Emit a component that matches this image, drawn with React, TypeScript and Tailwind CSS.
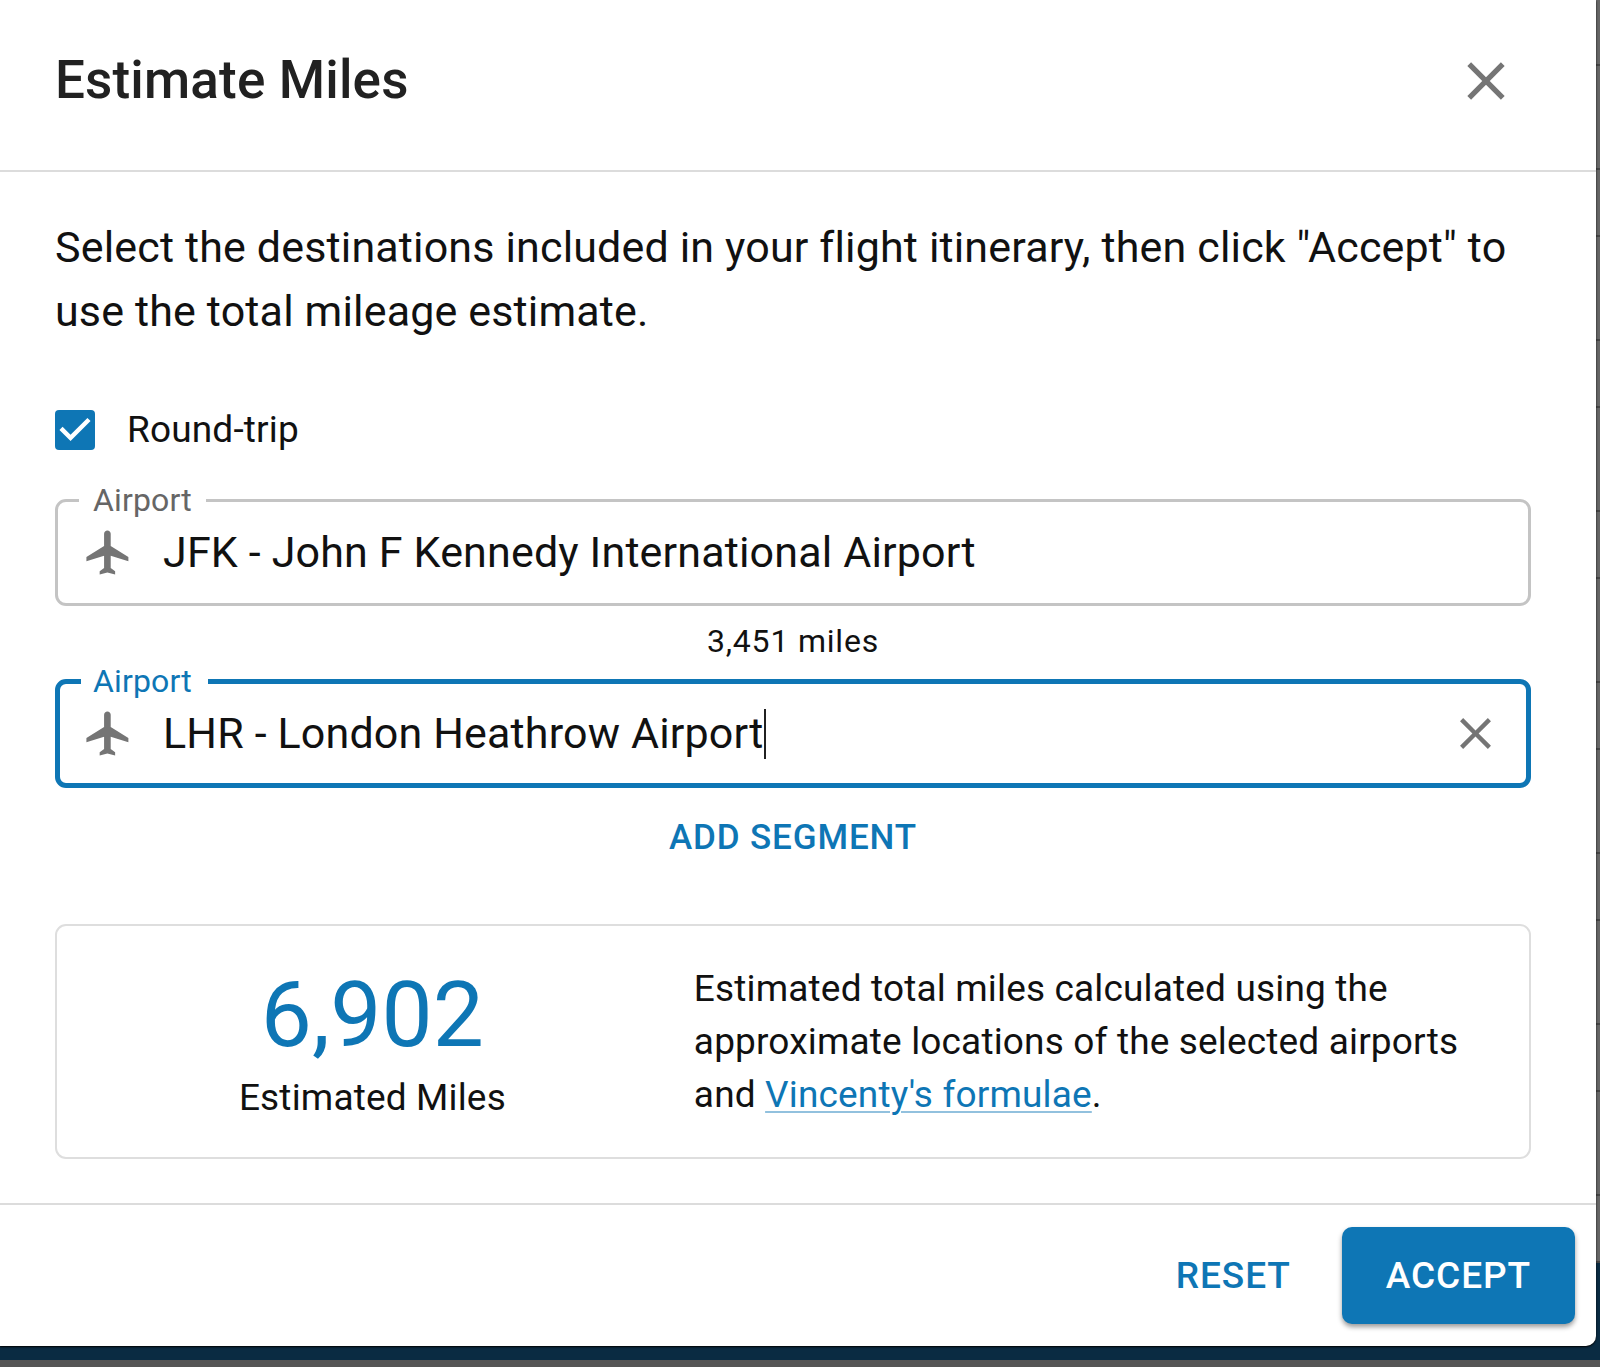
import { useState } from "react";
import { clsx } from "clsx";

const CloseIcon = ({ className }: { className?: string }) => (
  <svg viewBox="0 0 24 24" fill="currentColor" aria-hidden="true" className={className}>
    <path d="M19 6.41L17.59 5 12 10.59 6.41 5 5 6.41 10.59 12 5 17.59 6.41 19 12 13.41 17.59 19 19 17.59 13.41 12z" />
  </svg>
);

const FlightIcon = ({ className }: { className?: string }) => (
  <svg viewBox="0 0 24 24" fill="currentColor" aria-hidden="true" className={className}>
    <path d="M21 16v-2l-8-5V3.5c0-.83-.67-1.5-1.5-1.5S10 2.67 10 3.5V9l-8 5v2l8-2.5V19l-2 1.5V22l3.5-1 3.5 1v-1.5L13 19v-5.5l8 2.5z" />
  </svg>
);

interface AirportFieldProps {
  id: string;
  value: string;
  onChange: (value: string) => void;
  active?: boolean;
}

const AirportField = ({ id, value, onChange, active }: AirportFieldProps) => (
  <fieldset
    className={clsx(
      "min-w-0 rounded-[11px]",
      active ? "border-5 border-[#0e76b5]" : "border-3 border-[#c4c4c4]"
    )}
  >
    <legend
      className={clsx(
        "ml-[21px] text-[32px] leading-[32px]",
        active ? "pl-3 pr-4 text-[#0e76b5]" : "px-[14px] text-[#666]"
      )}
    >
      <label htmlFor={id}>Airport</label>
    </legend>
    <div className={clsx("flex items-center pt-2.5", active ? "pr-6 pb-[23px] pl-[22px]" : "px-6 pb-6")}>
      <FlightIcon className="size-[53px] shrink-0 text-[#757575]" />
      <div className="ml-7 flex min-w-0 flex-1 items-center">
        <input
          id={id}
          type="text"
          value={value}
          onChange={(e) => onChange(e.target.value)}
          className={clsx(
            "h-[53px] min-w-0 bg-transparent text-[43px] outline-none",
            active ? "field-sizing-content caret-transparent" : "flex-1"
          )}
        />
        {active && <span className="h-[50px] w-0.5 shrink-0 bg-[#212121]" />}
      </div>
      {active && (
        <button type="button" aria-label="Clear" onClick={() => onChange("")} className="text-[#757575]">
          <CloseIcon className="size-[53px]" />
        </button>
      )}
    </div>
  </fieldset>
);

// Dimmed page that sits behind the dialog
const Backdrop = () => (
  <div aria-hidden="true" className="absolute inset-0 flex flex-col bg-[#666]">
    <div className="min-h-0 flex-1 overflow-hidden">
      <div className="h-[66px] border-b-2 border-[#444]" />
      {Array.from({ length: 7 }, (_, i) => (
        <div key={i}>
          <div className="h-[104px] border-b-2 border-[#444]" />
          <div className="h-[67px] border-b-2 border-[#444]" />
        </div>
      ))}
    </div>
    <div className="h-[97px] bg-[#0a2b42]" />
    <div className="h-[7px] bg-[#555]" />
  </div>
);

export default function App() {
  const [roundTrip, setRoundTrip] = useState(true);
  const [from, setFrom] = useState("JFK - John F Kennedy International Airport");
  const [to, setTo] = useState("LHR - London Heathrow Airport");

  return (
    <div className="relative min-h-screen font-[Roboto,sans-serif] tracking-[0.01em] text-[#111]">
      <Backdrop />

      <main
        role="dialog"
        aria-labelledby="dialog-title"
        className="relative mr-1 rounded-br-[10px] bg-white shadow-[0_1px_2px_#000]"
      >
        <header className="flex items-center justify-between border-b-2 border-[#dcdcdc] pt-[38px] pr-[78px] pb-[47px] pl-[55px]">
          <h1 id="dialog-title" className="text-[53px] leading-[85px] font-medium text-[#212121]">
            Estimate Miles
          </h1>
          <button type="button" aria-label="Close" className="text-[#757575]">
            <CloseIcon className="size-16" />
          </button>
        </header>

        <div className="flex flex-col pt-[43px] pr-[65px] pb-11 pl-[55px]">
          <p className="text-[43px] leading-[64px]">
            Select the destinations included in your flight itinerary, then click "Accept" to use the total mileage
            estimate.
          </p>

          <label className="mt-[55px] flex h-16 items-center gap-8 self-start text-[37px]">
            <span className="grid size-10 place-items-center rounded-[4px] bg-[#0e76b5]">
              <input
                type="checkbox"
                checked={roundTrip}
                onChange={(e) => setRoundTrip(e.target.checked)}
                className="col-start-1 row-start-1 size-10 appearance-none"
              />
              {roundTrip && (
                <svg viewBox="3 3 18 18" aria-hidden="true" className="pointer-events-none col-start-1 row-start-1 size-10">
                  <path fill="#fff" d="M10 17l-5-5 1.41-1.41L10 14.17l7.59-7.59L19 8l-9 9z" />
                </svg>
              )}
            </span>
            Round-trip
          </label>

          <div className="mt-[22px]">
            <AirportField id="airport-from" value={from} onChange={setFrom} />
            <p className="mt-[11px] text-center text-[32px] leading-[48px] tracking-wide">3,451 miles</p>
            <AirportField id="airport-to" value={to} onChange={setTo} active />
          </div>

          <button
            type="button"
            className="mt-2.5 h-20 self-center px-4 text-[35px] font-medium tracking-wide text-[#0e76b5]"
          >
            ADD SEGMENT
          </button>

          <section className="mt-[46px] grid grid-cols-[3fr_4fr] items-center rounded-[11px] border-2 border-[#dedede] py-[33px]">
            <div className="text-center">
              <p className="text-[91px] leading-[112px] text-[#0e76b5]">6,902</p>
              <p className="text-[37px] leading-[53px]">Estimated Miles</p>
            </div>
            <p className="pr-10 pl-1.5 text-[37px] leading-[53px]">
              Estimated total miles calculated using the approximate locations of the selected airports and{" "}
              <a
                href="#vincenty"
                className="text-[#0e76b5] underline decoration-[#0e76b5]/45 decoration-2 underline-offset-4"
              >
                Vincenty's formulae
              </a>
              .
            </p>
          </section>
        </div>

        <footer className="flex justify-end gap-[21px] border-t-2 border-[#dcdcdc] py-[22px] pr-[21px]">
          <button type="button" className="px-[30px] text-[37px] font-medium tracking-wide text-[#0e76b5]">
            RESET
          </button>
          <button
            type="button"
            className="h-[97px] rounded-[10px] bg-[#0e76b5] px-11 text-[37px] font-medium tracking-wide text-white shadow-[0_3px_5px_rgba(0,0,0,0.4)]"
          >
            ACCEPT
          </button>
        </footer>
      </main>
    </div>
  );
}
